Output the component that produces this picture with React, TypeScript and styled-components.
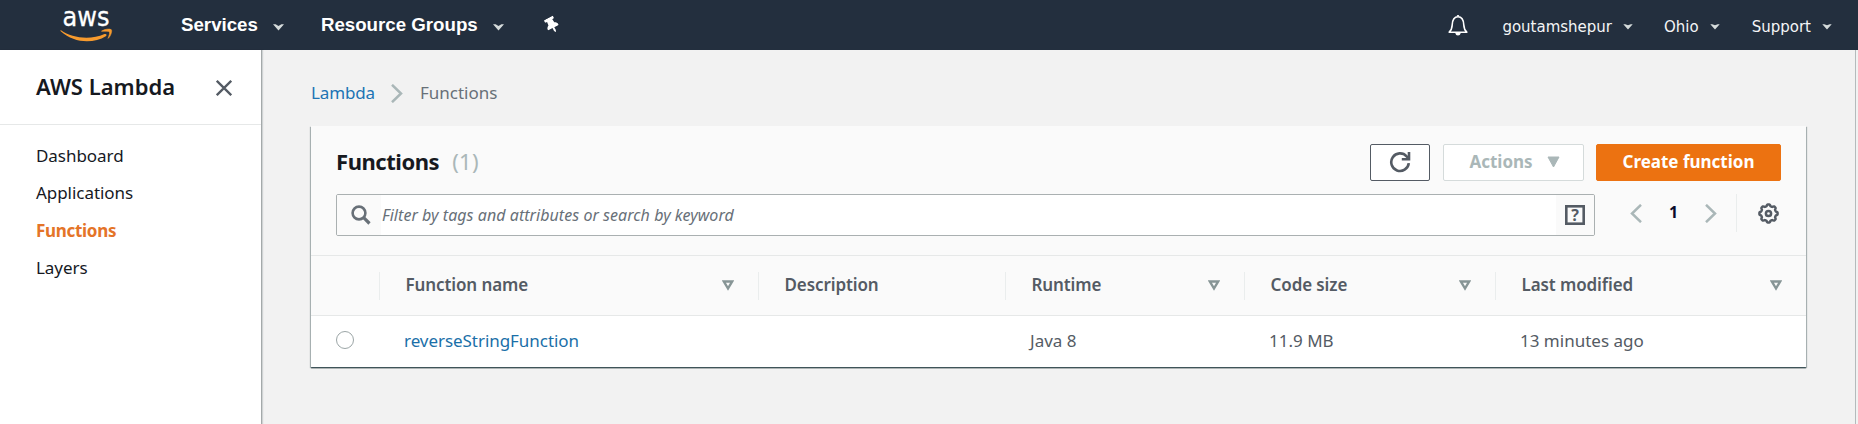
import React from "react";
import styled, { createGlobalStyle } from "styled-components";
import { FaThumbtack } from "react-icons/fa";

const GlobalStyle = createGlobalStyle`
  * { box-sizing: border-box; }
  body {
    margin: 0;
    background: #f2f2f2;
    font-family: "Noto Sans", "Open Sans", sans-serif;
    font-size: 17px;
    color: #16191f;
  }
  button { font: inherit; padding: 0; margin: 0; background: none; border: 0; }
  ul { list-style: none; margin: 0; padding: 0; }
  a { color: inherit; text-decoration: none; }
  svg { display: block; flex: none; }
`;

const Page = styled.div`
  height: 424px;
  display: flex;
  flex-direction: column;
  overflow: hidden;
`;

const TopBar = styled.header`
  height: 50px;
  flex: none;
  display: flex;
  align-items: center;
  padding: 0 26px 0 60px;
  background: #232f3e;
  color: #fff;
`;

const Logo = styled.a`
  display: flex;
  width: 121px;
`;

const ServiceMenu = styled.button<{ $gap: number }>`
  display: flex;
  align-items: center;
  gap: 15px;
  height: 50px;
  padding-bottom: 1px;
  margin-right: ${(p) => p.$gap}px;
  color: #fff;
  font: 700 18.7px/50px "Liberation Sans", Arial, sans-serif;
  white-space: nowrap;
  svg { margin-top: 5px; }
`;

const PinButton = styled.button`
  display: flex;
  color: #fff;
  transform: rotate(-28deg);
`;

const Account = styled.nav`
  margin-left: auto;
  display: flex;
  align-items: center;
`;

const BellButton = styled.button`
  display: flex;
  margin-right: 34px;
`;

const AccountMenu = styled.button<{ $gap?: number }>`
  display: flex;
  align-items: center;
  gap: 11px;
  margin-right: ${(p) => p.$gap ?? 0}px;
  padding-top: 3px;
  color: #f4f5f6;
  font: 400 15px/20px "DejaVu Sans", Verdana, sans-serif;
`;

const Body = styled.div`
  flex: 1;
  display: flex;
  min-height: 0;
`;

const Sidebar = styled.aside`
  width: 262px;
  flex: none;
  background: #fff;
  border-right: 1px solid #a4a9aa;
  box-shadow: 1px 0 1px rgba(0, 28, 36, 0.14);
`;

const SidebarHeader = styled.div`
  display: flex;
  align-items: center;
  justify-content: space-between;
  height: 75px;
  padding: 0 29px 0 36px;
  border-bottom: 1px solid #e6e8e8;
`;

const SidebarTitle = styled.h2`
  margin: 0 0 2px;
  font-size: 22px;
  line-height: 30px;
  font-weight: 600;
`;

const CloseButton = styled.button`
  display: flex;
  padding-top: 2px;
`;

const NavList = styled.ul`
  padding: 12px 36px;
`;

const NavItem = styled.li<{ $active?: boolean }>`
  line-height: 37.4px;
  font-weight: ${(p) => (p.$active ? 700 : 400)};
  letter-spacing: ${(p) => (p.$active ? "-0.3px" : "-0.05px")};
  color: ${(p) => (p.$active ? "#e47428" : "#16191f")};
`;

const Main = styled.main`
  flex: 1;
  min-width: 0;
  margin-right: 2px;
  padding: 0 49px;
  border-right: 1px solid #b4bbbc;
`;

const Breadcrumb = styled.nav`
  display: flex;
  align-items: center;
  height: 76px;
  padding-top: 8px;
  color: #687078;
`;

const Crumb = styled.a`
  color: #2074b4;
  letter-spacing: -0.15px;
  margin-right: 16px;
  & + svg { margin: 2px 17px 0 0; }
`;

const Card = styled.section`
  height: 241px;
  background: #fff;
  box-shadow: 0 1px 1px 0 rgba(0, 28, 36, 0.45), 1px 1px 1px 0 rgba(0, 28, 36, 0.25), -1px 1px 1px 0 rgba(0, 28, 36, 0.25), 0 2px 0 rgba(0, 28, 36, 0.15);
`;

const CardHeader = styled.div`
  height: 130px;
  padding: 18px 25px 0;
  background: #fafafa;
  border-bottom: 1px solid #e6e8e8;
`;

const TitleRow = styled.div`
  display: flex;
  align-items: center;
  height: 37px;
`;

const Title = styled.h1`
  margin: 0 auto 3px 0;
  font-size: 22px;
  line-height: 30px;
  font-weight: 700;
  letter-spacing: -0.45px;
`;

const Count = styled.span`
  margin-left: 13px;
  font-weight: 400;
  letter-spacing: 0.3px;
  color: #aab7b8;
`;

const Button = styled.button<{ $kind: "icon" | "disabled" | "primary" }>`
  display: flex;
  align-items: center;
  justify-content: center;
  gap: 14px;
  height: 37px;
  border-radius: 2px;
  font-weight: 700;
  line-height: 34px;
  padding: 0 0 1px ${(p) => (p.$kind === "disabled" ? 2 : 0)}px;
  width: ${(p) => ({ icon: 60, disabled: 141, primary: 185 })[p.$kind]}px;
  margin-right: ${(p) => ({ icon: 13, disabled: 12, primary: 0 })[p.$kind]}px;
  border: 1px solid ${(p) => ({ icon: "#545b64", disabled: "#d5dbdb", primary: "#ec7211" })[p.$kind]};
  background: ${(p) => (p.$kind === "primary" ? "#ec7211" : "#fff")};
  color: ${(p) => ({ icon: "#545b64", disabled: "#aab7b8", primary: "#fff" })[p.$kind]};
`;

const FilterRow = styled.div`
  display: flex;
  align-items: flex-start;
  margin-top: 13px;
`;

const SearchBox = styled.label`
  display: flex;
  align-items: center;
  width: 1259px;
  height: 42px;
  border: 1px solid #aab0b1;
  border-radius: 2px;
  background: #fff;
  overflow: hidden;
`;

const SearchAddon = styled.span<{ $side: "left" | "right" }>`
  display: flex;
  align-items: center;
  align-self: stretch;
  width: ${(p) => (p.$side === "left" ? 44 : 38)}px;
  padding-left: ${(p) => (p.$side === "left" ? 14 : 9)}px;
  background: #fafafa;
`;

const SearchInput = styled.input`
  flex: 1;
  min-width: 0;
  border: 0;
  outline: 0;
  padding: 0 1px;
  background: #fff;
  font: italic 400 16px/24px "Noto Sans", sans-serif;
  letter-spacing: 0.05px;
  &::placeholder { color: #687078; opacity: 1; }
`;

const Pager = styled.div`
  display: flex;
  align-items: center;
  height: 38px;
  margin-left: 35px;
`;

const PageNumber = styled.span`
  width: 11px;
  margin: -3px 26px 0 26px;
  font-size: 16px;
  font-weight: 700;
  text-align: center;
  color: #0a0c2c;
`;

const PagerDivider = styled.span`
  width: 1px;
  height: 38px;
  margin: 0 21px 0 19px;
  background: #eaeded;
`;

const TableRow = styled.div<{ $head?: boolean }>`
  display: grid;
  grid-template-columns: 68px 379px 247px 239px 251px 1fr;
  align-items: center;
  height: ${(p) => (p.$head ? 60 : 51)}px;
  padding-bottom: ${(p) => (p.$head ? 0 : 2)}px;
  background: ${(p) => (p.$head ? "#fafafa" : "#fff")};
  border-bottom: ${(p) => (p.$head ? "1px solid #e6e8e8" : "0")};
`;

const HeadCell = styled.div`
  display: flex;
  align-items: center;
  justify-content: space-between;
  height: 28px;
  padding: 0 24px 0 25.5px;
  border-left: 1px solid #eaeded;
  font-weight: 600;
  letter-spacing: -0.1px;
  line-height: 26px;
  color: #545b64;
`;

const HeadLabel = styled.span`
  margin-bottom: 1px;
`;

const Cell = styled.div`
  padding-left: 25px;
  color: #545b64;
`;

const FunctionLink = styled.a`
  letter-spacing: -0.05px;
  color: #1a6fa8;
`;

const Radio = styled.span`
  display: block;
  width: 18px;
  height: 18px;
  margin: -2px 0 0 25px;
  border: 1px solid #9ba5a6;
  border-radius: 50%;
  background: #fff;
`;

const AwsLogo = () => (
  <svg width="54" height="50" viewBox="0 -7 54 50">
    <text x="2.5" y="18.500" textLength="47" lengthAdjust="spacingAndGlyphs" fontFamily="DejaVu Sans, sans-serif" fontSize="26" fill="#fff" stroke="#fff" strokeWidth=".3">aws</text>
    <path d="M1 23.3c11 7.8 29 10.2 43.500 3.800 1.800-.8 2.900 1 1.300 2.100C34 36.500 14 36.500 1 24.500c-.9-.8-.6-1.700 0-1.200z" fill="#f79b2e" />
    <path d="M41.500 24.200c3-2.200 8.500-2.600 9.800-1.500 1.100 1.200-.6 6.600-3.200 8.700 1-3 2-5.600 1.300-6.500-.8-.9-4.500-.7-7.900-.7z" fill="#f79b2e" stroke="#f79b2e" strokeWidth=".6" />
  </svg>
);

const Caret = () => (
  <svg width="11" height="7" viewBox="0 0 11 7">
    <path d="M0 .3h2.600l2.900 1.600L8.400.3H11L5.500 6.600z" fill="#d5dbdb" />
  </svg>
);

const SmallCaret = () => (
  <svg width="10" height="6" viewBox="0 0 10 6">
    <path d="M.3.300h2l2.700 1 2.700-1h2L5 5.600z" fill="#d5dbdb" />
  </svg>
);

const Bell = () => (
  <svg width="20" height="22" viewBox="0 0 20 22" fill="none" stroke="#fff" strokeWidth="1.600" strokeLinejoin="round">
    <path d="M1.200 18.200c2.200-1.800 2.800-3.900 3-7.200C4.400 5.700 6.300 2.700 10 2.700s5.600 3 5.800 8.300c.2 3.300.8 5.400 3 7.200z" />
    <path d="M7.300 19h5.400c-.3 1.700-1.300 2.500-2.700 2.500S7.600 20.700 7.300 19zM8.700 2.200a1.300 1.300 0 0 1 2.600 0z" fill="#fff" stroke="none" />
  </svg>
);

const Close = () => (
  <svg width="16" height="16" viewBox="0 0 16 16" stroke="#545b64" strokeWidth="2.300">
    <path d="M.8.800l14.400 14.400M15.200.8L.8 15.200" />
  </svg>
);

const Chevron = ({ left = false }: { left?: boolean }) => (
  <svg width="12" height="19" viewBox="0 0 12 19" fill="none" stroke="#aab7b8" strokeWidth="2.500">
    <path d={left ? "M11 .8L2 9.500l9 8.700" : "M1 .8l9 8.700-9 8.700"} />
  </svg>
);

const Refresh = () => (
  <svg width="22" height="22" viewBox="0 0 22 22" fill="none" stroke="#545b64" strokeWidth="2.600">
    <path d="M19.800 12.200A8.800 8.800 0 1 1 17.600 5.300L19.500 7.500" />
    <path d="M20 1v7.200h-7.200" />
  </svg>
);

const SolidTriangle = () => (
  <svg width="13" height="12" viewBox="0 0 13 12">
    <path d="M1 1h11L6.500 11z" fill="#aab7b8" stroke="#aab7b8" strokeLinejoin="round" />
  </svg>
);

const Sort = () => (
  <svg width="12" height="11" viewBox="0 0 12 11" fill="none" stroke="#879596" strokeWidth="2.400">
    <path d="M1.900 1.500h8.200L6 8.500z" />
  </svg>
);

const Search = () => (
  <svg width="20" height="20" viewBox="0 0 20 20" fill="none" stroke="#687078">
    <circle cx="8" cy="8" r="6.400" strokeWidth="2.600" />
    <path d="M12.700 12.700l5.800 5.800" strokeWidth="3.200" />
  </svg>
);

const Help = () => (
  <svg width="20" height="20" viewBox="0 0 20 20">
    <rect x="1.300" y="1.300" width="17.400" height="17.400" fill="none" stroke="#545b64" strokeWidth="2.600" />
    <text x="10" y="15.700" textAnchor="middle" fontFamily="Noto Sans, sans-serif" fontSize="16" fontWeight="700" fill="#545b64">?</text>
  </svg>
);

const gearPath = (() => {
  const points: string[] = [];
  for (let i = 0; i < 96; i++) {
    const angle = (i / 96) * Math.PI * 2;
    const r = 8.300 + 0.8 * Math.tanh(2.500 * Math.cos(angle * 8));
    points.push(`${(10.500 + r * Math.cos(angle)).toFixed(2)} ${(10.500 + r * Math.sin(angle)).toFixed(2)}`);
  }
  return `M${points.join("L")}Z`;
})();

const Gear = () => (
  <svg width="21" height="21" viewBox="0 0 21 21" fill="none" stroke="#545b64" strokeWidth="2.500" strokeLinejoin="round">
    <path d={gearPath} />
    <circle cx="10.500" cy="10.500" r="2.600" />
  </svg>
);

const navItems = ["Dashboard", "Applications", "Functions", "Layers"];
const columns = [
  { label: "Function name", sortable: true },
  { label: "Description", sortable: false },
  { label: "Runtime", sortable: true },
  { label: "Code size", sortable: true },
  { label: "Last modified", sortable: true },
];

export default function App() {
  return (
    <Page>
      <GlobalStyle />
      <TopBar>
        <Logo><AwsLogo /></Logo>
        <ServiceMenu $gap={37}>Services<Caret /></ServiceMenu>
        <ServiceMenu $gap={40}>Resource Groups<Caret /></ServiceMenu>
        <PinButton><FaThumbtack size={16} /></PinButton>
        <Account>
          <BellButton><Bell /></BellButton>
          <AccountMenu $gap={31}>goutamshepur<SmallCaret /></AccountMenu>
          <AccountMenu $gap={32}>Ohio<SmallCaret /></AccountMenu>
          <AccountMenu>Support<SmallCaret /></AccountMenu>
        </Account>
      </TopBar>
      <Body>
        <Sidebar>
          <SidebarHeader>
            <SidebarTitle>AWS Lambda</SidebarTitle>
            <CloseButton><Close /></CloseButton>
          </SidebarHeader>
          <NavList>
            {navItems.map((item) => (
              <NavItem key={item} $active={item === "Functions"}>{item}</NavItem>
            ))}
          </NavList>
        </Sidebar>
        <Main>
          <Breadcrumb>
            <Crumb>Lambda</Crumb>
            <Chevron />
            <span>Functions</span>
          </Breadcrumb>
          <Card>
            <CardHeader>
              <TitleRow>
                <Title>Functions<Count>(1)</Count></Title>
                <Button $kind="icon"><Refresh /></Button>
                <Button $kind="disabled">Actions<SolidTriangle /></Button>
                <Button $kind="primary">Create function</Button>
              </TitleRow>
              <FilterRow>
                <SearchBox>
                  <SearchAddon $side="left"><Search /></SearchAddon>
                  <SearchInput placeholder="Filter by tags and attributes or search by keyword" />
                  <SearchAddon $side="right"><Help /></SearchAddon>
                </SearchBox>
                <Pager>
                  <Chevron left />
                  <PageNumber>1</PageNumber>
                  <Chevron />
                  <PagerDivider />
                  <Gear />
                </Pager>
              </FilterRow>
            </CardHeader>
            <TableRow $head>
              <span />
              {columns.map((column) => (
                <HeadCell key={column.label}>
                  <HeadLabel>{column.label}</HeadLabel>
                  {column.sortable && <Sort />}
                </HeadCell>
              ))}
            </TableRow>
            <TableRow>
              <Radio />
              <Cell><FunctionLink>reverseStringFunction</FunctionLink></Cell>
              <Cell />
              <Cell>Java 8</Cell>
              <Cell>11.9 MB</Cell>
              <Cell>13 minutes ago</Cell>
            </TableRow>
          </Card>
        </Main>
      </Body>
    </Page>
  );
}
